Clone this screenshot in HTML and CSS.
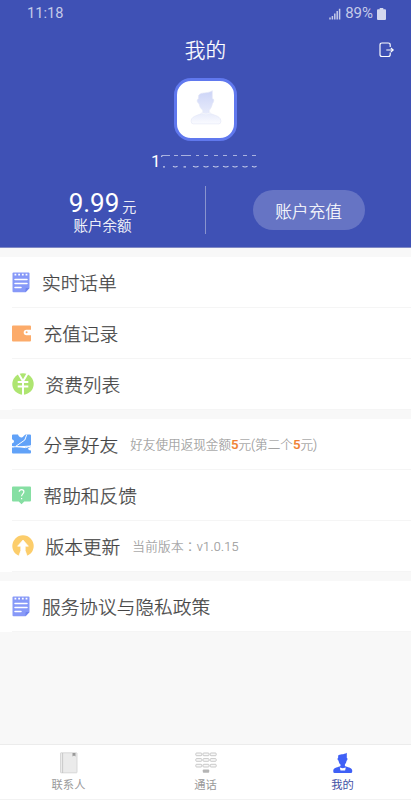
FILE: index.html
```html
<!DOCTYPE html>
<html lang="zh-CN">
<head>
<meta charset="utf-8">
<title>我的</title>
<link rel="stylesheet" href="styles.css">
</head>
<body>
<svg width="0" height="0" class="defs">
  <defs>
    <linearGradient id="person" x1="0" y1="0" x2="0" y2="1"><stop offset="0" stop-color="#ccd4f7"/><stop offset=".65" stop-color="#e6eafb"/><stop offset="1" stop-color="#fafbff"/></linearGradient>
    <symbol id="note" viewBox="0 0 18 21">
      <path d="M1.5 .5H16.5Q17.5 .5 17.5 1.5V16L13.5 20.2H1.5Q.5 20.2 .5 19.2V1.5Q.5 .5 1.5 .5Z" fill="#8799f8"/>
      <path d="M17.5 16L13.5 20.2V17Q13.5 16 14.5 16Z" fill="#6f83ee"/>
      <path d="M2.5 2.6H4.3M6.2 2.6H8M9.9 2.6H11.7M13.6 2.6H15.4" stroke="#fff" stroke-width="1.8"/>
      <path d="M3 7.5H15M3 11.5H15M3 15.5H9" stroke="#fff" stroke-width="1.5" stroke-linecap="round"/>
    </symbol>
  </defs>
</svg>
<div class="screen">
  <header class="hero">
    <div class="status">
      <span>11:18</span>
      <div class="status-right">
        <svg width="12" height="12" viewBox="0 0 12 12"><path d="M1 9.5V11.5M3.4 8V11.5M5.8 5.5V11.5M8.2 3V11.5M10.6 .8V11.5" stroke="#c5cbe9" stroke-width="1.5"/></svg>
        <span>89%</span>
        <svg width="9" height="12" viewBox="0 0 9 12"><path d="M2.7 0H6.3V1.2H8Q9 1.2 9 2.2V11Q9 12 8 12H1Q0 12 0 11V2.2Q0 1.2 1 1.2H2.7Z" fill="#d4d8ef"/></svg>
      </div>
    </div>
    <div class="titlebar">
      <h1>我的</h1>
      <svg class="logout" width="16" height="16" viewBox="0 0 16 16" fill="none" stroke="#fff" stroke-width="1.15"><path d="M11.2 5V3Q11.2 1 9.2 1H3Q1 1 1 3V12.5Q1 14.5 3 14.5H9.2Q11.2 14.5 11.2 12.5V10.5"/><path d="M7.3 8H14.2M11.8 5.9L14.2 8L11.8 10.1"/></svg>
    </div>
    <div class="avatar">
      <svg width="32" height="37" viewBox="0 0 32 37"><path d="M8.6 5.6C9.8 2.9 12.8 3.2 16 2.7C18.8 2.3 21 1.8 22.3.7V8.8C24.4 8.7 24.2 11.3 22.5 13.5C21.8 17 19.9 19.5 19.2 20.2V22.7C23 25.3 30 25.6 30.8 30.2V31.7Q30.8 33.9 28.5 33.9H3.4Q1.2 33.9 1.2 31.7V30.2C2 25.6 9.3 25.3 12.8 22.7V20.2C10.5 18.5 9.5 16.3 9 13.5C7 12.5 6.5 9.3 8.4 8.9Z" fill="url(#person)" stroke="#e2e6f6" stroke-width=".6"/><path d="M11 22.8Q16 25.4 21 22.8" fill="none" stroke="#f3f5fc"/></svg>
    </div>
    <div class="phone">
      <span>1</span>
      <svg width="97" height="16" viewBox="0 0 97 16" stroke="#c5cbea" fill="none"><path d="M1 2.5H9M13 2.5H17M20 2.5H30M35 2.5H38M43 2.5H47M53 2.5H57M62 2.5H66M72 2.5H76M82 2.5H86M91 2.5H95" stroke-width=".8"/><path d="M1 2.5L.5 4M2 13.8H4M12 13.3Q14 14.7 16.5 13.3M22.5 13.8H25M32 13.3Q35 14.7 37.5 13.3M42.5 13.3Q45 14.7 47.5 13.3M52 13.3Q55 14.7 57.5 13.3M62 13.3Q65 14.7 67.5 13.3M71.5 13.3Q74 14.7 76.5 13.3M81.5 13.3Q84 14.7 86.5 13.3M91 13.3Q93.5 14.7 95.5 13.3" stroke-width="1.2"/></svg>
    </div>
    <div class="account">
      <div class="balance">
        <div class="amount"><span class="num">9.99</span><span class="unit">元</span></div>
        <div class="caption">账户余额</div>
      </div>
      <div class="recharge"><button>账户充值</button></div>
    </div>
  </header>

  <main>
    <section class="group">
      <div class="row"><svg class="i-note" width="18" height="21"><use href="#note"/></svg><span class="label">实时话单</span></div>
      <div class="row"><svg class="i-box" width="20" height="17" viewBox="0 0 20 17"><path d="M1 .5H18Q19 .5 19 1.5V4.7H14.5A2.8 2.8 0 0 0 14.5 10.3H19V15.5Q19 16.5 18 16.5H1Q0 16.5 0 15.5V1.5Q0 .5 1 .5Z" fill="#fcab6a"/><path d="M19.4 5.4H14.5A2.1 2.1 0 0 0 14.5 9.6H19.4Z" fill="#fff"/><circle cx="14.6" cy="7.2" r="1" fill="#fcab6a"/></svg><span class="label">充值记录</span></div>
      <div class="row"><svg class="i-round" width="22" height="22" viewBox="0 0 22 22"><circle cx="11" cy="11" r="10.7" fill="#aee571"/><path d="M6.4 .5L11 8.3L15.6 .5M11 8V22M5.7 9H16.3M5.7 13.6H16.3" stroke="#fff" stroke-width="2" fill="none"/></svg><span class="label">资费列表</span></div>
    </section>
    <section class="group">
      <div class="row"><svg class="i-box" width="20" height="20" viewBox="0 0 20 20"><path d="M1 .5H6C7 3.2 8.5 3.6 9.8 3.4C11.5 3.1 12 1.2 13.6 .5H18Q19 .5 19 1.5V11.5L4 12.5L0 12V9.5C2.6 8.8 2.8 6.2 0 5.3V1.5Q0 .5 1 .5ZM0 13.4C3 13 8 13.2 19 12.4V13C15.2 13.8 15.2 15.8 19 16.6V18.5Q19 19.5 18 19.5H1Q0 19.5 0 18.5Z" fill="#61a2f8"/><path d="M3.7 12.4L12.8 6L14.8 .5M3.7 12.4L13.5 13.6L19.5 11.8" stroke="#fff" stroke-width="1" fill="none"/></svg><span class="label">分享好友</span><span class="hint">好友使用返现金额<b>5</b>元(第二个<b>5</b>元)</span></div>
      <div class="row"><svg class="i-box" width="20" height="19" viewBox="0 0 20 19"><path d="M1 .5H18Q19 .5 19 1.5V14.5Q19 15.5 18 15.5H12.3L9.5 18.3L6.7 15.5H1Q0 15.5 0 14.5V1.5Q0 .5 1 .5Z" fill="#86dfa3"/><path d="M7.2 5.8C7.3 2.9 11.9 3 11.9 5.8C11.9 7.8 9.6 7.9 9.6 10.2M9.6 12V13.3" stroke="#fff" stroke-width="1.2" fill="none"/></svg><span class="label">帮助和反馈</span></div>
      <div class="row"><svg class="i-round" width="22" height="22" viewBox="0 0 22 22"><circle cx="11" cy="11" r="10.7" fill="#fccd6b"/><path d="M11 5L16.4 11.2H13.2V15.7L15.5 22H6.5L8.8 15.7V11.2H5.6Z" fill="#fff" stroke="#fff" stroke-width=".7" stroke-linejoin="round"/></svg><span class="label">版本更新</span><span class="hint version">当前版本<span class="colon" lang="zh-TW">：</span>v1.0.15</span></div>
    </section>
    <section class="group">
      <div class="row"><svg class="i-note" width="18" height="21"><use href="#note"/></svg><span class="label">服务协议与隐私政策</span></div>
    </section>
  </main>

  <nav>
    <a><svg width="22" height="22" viewBox="0 0 22 22"><rect x="2.5" y=".8" width="16.5" height="20" rx=".5" fill="#ebebeb" stroke="#d0d0d0" stroke-width=".8"/><path d="M4.6 1V21" stroke="#bbb" stroke-width=".7"/><path d="M14.5 1H17.5V4.5L16 3.5L14.5 4.5Z" fill="#999"/></svg><span>联系人</span></a>
    <a><svg width="22" height="22" viewBox="0 0 22 22"><g fill="#f8f8f8" stroke="#c3c3c3" stroke-width=".9"><rect x=".8" y="1" width="6" height="2.7" rx=".8"/><rect x="8" y="1" width="6" height="2.7" rx=".8"/><rect x="15.2" y="1" width="6" height="2.7" rx=".8"/><rect x=".8" y="6.6" width="6" height="2.7" rx=".8"/><rect x="8" y="6.6" width="6" height="2.7" rx=".8"/><rect x="15.2" y="6.6" width="6" height="2.7" rx=".8"/><rect x=".8" y="12.3" width="6" height="2.7" rx=".8"/><rect x="8" y="12.3" width="6" height="2.7" rx=".8"/><rect x="15.2" y="12.3" width="6" height="2.7" rx=".8"/></g><rect x="7.8" y="17.5" width="6.4" height="3.2" rx=".8" fill="#b5b5b5"/></svg><span>通话</span></a>
    <a class="active"><svg width="22" height="22" viewBox="0 0 22 22"><path d="M6.2 3.4C7.7 1.9 11.8 2.8 14.8 .7V6C16 6.3 15.5 8.2 14.6 8.8C14.2 10.8 13.4 12 12.9 12.6V14C15.4 15.4 19.6 15.4 20.2 18.3V19.7Q20.2 21 18.8 21H2.6Q1.3 21 1.3 19.7V18.3C1.9 15.4 6.3 15.4 8.5 14V12.6C7.3 11.6 6.8 10.6 6.6 8.8C5.3 8 5.2 6.3 6.1 6Z" fill="#3f60f6"/><path d="M7.8 15.4L10.8 16.3L13.8 15.4L13.1 18.6H8.5Z" fill="#fff"/></svg><span>我的</span></a>
  </nav>
</div>
</body>
</html>
```
FILE: styles.css
```css
* { box-sizing: border-box; }
body {
  margin: 0;
  background: #f8f8f8;
  font-family: Roboto, "Noto Sans CJK SC", sans-serif;
}
.defs { display: block; height: 0; }
.screen { width: 411px; height: 800px; display: flex; flex-direction: column; overflow: hidden; }
svg { display: block; flex: none; }

.hero {
  height: 248px;
  background: #3f51b5;
  border-bottom: 1px solid #8089c4;
  color: #fff;
  display: flex;
  flex-direction: column;
}
.status {
  height: 27px;
  padding: 0 25px 0 27px;
  display: flex;
  align-items: center;
  justify-content: space-between;
  color: #c5cbe9;
  font-size: 14.6px;
  line-height: 27px;
}
.status-right { display: flex; align-items: center; gap: 4px; font-size: 15px; }
.titlebar {
  height: 46px;
  display: grid;
  grid-template-columns: 1fr auto 1fr;
  align-items: center;
}
h1 { grid-column: 2; margin: 0; padding-top: 2px; font-size: 20.7px; font-weight: 300; line-height: 44px; -webkit-text-stroke: .25px; }
.logout { justify-self: end; margin-right: 16px; }
.avatar {
  width: 63px;
  height: 63px;
  margin: 5px auto 0;
  border: 3px solid #6078ee;
  border-radius: 17px;
  background: #fff;
  display: flex;
  justify-content: center;
  padding-top: 9px;
}
.phone { height: 20px; margin: 10px 0 0 151px; display: flex; align-items: center; font-size: 17px; line-height: 20px; }
.account { height: 48px; margin-top: 15px; display: grid; grid-template-columns: 206px 1fr; grid-template-rows: 48px; }
.balance { border-right: 1px solid #8994ce; text-align: center; }
.amount { height: 31px; display: flex; justify-content: center; align-items: baseline; line-height: 34px; }
.num { font-size: 26px; }
.unit { font-size: 14px; margin-left: 3px; font-weight: 300; -webkit-text-stroke: .2px; }
.caption { font-size: 14.5px; line-height: 18px; padding-top: 1px; font-weight: 300; -webkit-text-stroke: .2px; }
.recharge { display: flex; justify-content: center; align-items: center; }
button {
  width: 112px;
  height: 40px;
  border: 0;
  border-radius: 20px;
  background: #6674c4;
  color: #fff;
  font: inherit;
  font-size: 16.7px;
  font-weight: 300;
  -webkit-text-stroke: .2px;
  padding: 1px 0 0;
}

main { flex: 1; display: flex; flex-direction: column; gap: 9px; padding-top: 9px; }
.group { background: #fff; padding-left: 12px; }
.row { height: 51px; display: flex; align-items: center; border-bottom: 1px solid #f5f5f5; }
.label { font-size: 18.7px; font-weight: 300; color: #444; -webkit-text-stroke: .25px; line-height: 48px; padding-top: 3px; white-space: nowrap; }
.i-note { margin-right: 12px; }
.i-box { margin-right: 11.5px; }
.i-round { margin-right: 11.5px; }
.hint { margin-left: 12px; padding-bottom: 2px; font-size: 12.6px; font-weight: 300; color: #999; -webkit-text-stroke: .15px; white-space: nowrap; }
.hint b { color: #f08031; font-size: 13.2px; font-weight: 500; }
.version { letter-spacing: .3px; }
.colon { font-family: "Noto Sans CJK TC", sans-serif; }

nav {
  height: 56px;
  background: #fff;
  border-top: 1px solid #ececec;
  border-bottom: 1px solid #f2f2f2;
  display: grid;
  grid-template-columns: repeat(3, 1fr);
}
nav a { display: flex; flex-direction: column; align-items: center; padding-top: 7px; font-size: 11.3px; line-height: 24px; color: #999; }
nav .active { color: #3f51a5; }
```
